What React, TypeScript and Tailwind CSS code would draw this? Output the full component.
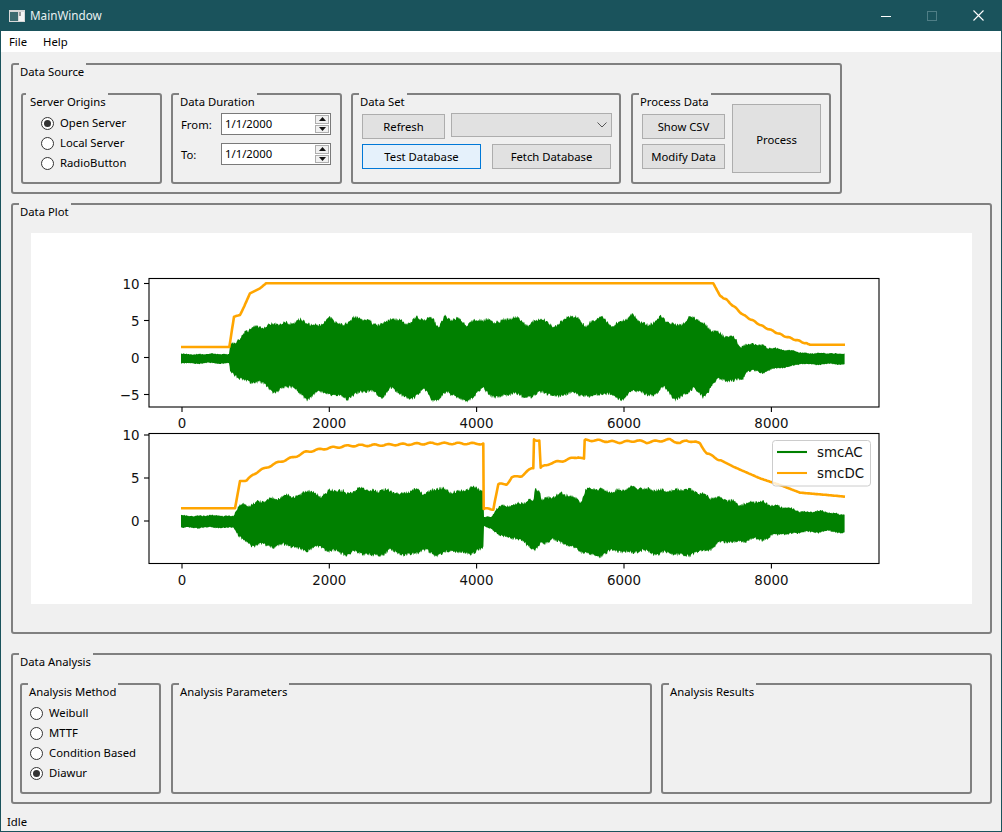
import { type ReactNode } from "react";

type Pt = [number, number];

// traced in 3x zoom coordinates, fromZoom brings them back to window pixels
const fromZoom = (pts: number[][], ox: number, oy: number): Pt[] =>
  pts.map(([x, y]) => [ox + x / 3, oy + y / 3]);

const top1 = [
  ...fromZoom([[243, 267], [388, 267], [390, 235], [420, 225], [440, 200], [460, 183], [520, 180], [600, 165], [640, 185], [690, 158], [730, 185], [760, 152], [810, 170], [820, 185], [880, 157], [920, 180], [950, 155], [1000, 165], [1015, 188], [1035, 155], [1075, 160], [1100, 183], [1140, 158], [1200, 175]], 100, 265),
  ...fromZoom([[30, 155], [55, 155], [85, 185], [120, 158], [175, 185], [200, 155], [235, 155], [260, 185], [300, 155], [340, 180], [400, 152], [445, 180], [480, 160], [530, 180], [580, 158], [620, 180], [670, 215], [700, 215], [725, 240], [760, 238], [830, 250], [875, 258], [930, 265], [1035, 265]], 500, 265),
];
const bottom1 = [
  ...fromZoom([[243, 295], [388, 295], [390, 320], [420, 345], [470, 350], [520, 380], [570, 365], [620, 400], [680, 380], [745, 405], [780, 375], [850, 395], [870, 370], [930, 405], [970, 372], [995, 408], [1040, 385], [1100, 408], [1150, 375], [1200, 400]], 100, 265),
  ...fromZoom([[40, 385], [100, 400], [130, 375], [170, 400], [220, 380], [270, 400], [300, 380], [370, 405], [400, 372], [440, 395], [490, 370], [525, 405], [580, 370], [610, 400], [640, 350], [700, 345], [730, 340], [740, 320], [790, 320], [860, 305], [900, 298], [1035, 298]], 500, 265),
];
const top2 = [
  ...fromZoom([[243, 272], [400, 272], [415, 245], [450, 240], [480, 225], [540, 222], [560, 205], [600, 215], [620, 197], [660, 210], [690, 195], [740, 205], [785, 185], [810, 205], [860, 190], [900, 210], [950, 190], [980, 205], [1020, 190], [1080, 200], [1135, 187], [1150, 195], [1152, 275]], 100, 425),
  ...fromZoom([[35, 275], [50, 250], [95, 237], [130, 230], [160, 230], [165, 195], [180, 195], [185, 225], [215, 210], [270, 210], [305, 225], [315, 195], [380, 195], [430, 195], [480, 185], [540, 200], [600, 190], [680, 210], [730, 225], [800, 235], [850, 230], [900, 245], [960, 258], [1030, 260], [1095, 268]], 480, 425),
];
const bottom2 = [
  ...fromZoom([[243, 308], [400, 308], [420, 340], [445, 355], [490, 365], [550, 360], [600, 372], [650, 372], [700, 375], [735, 392], [770, 378], [820, 398], [870, 375], [910, 392], [960, 378], [1000, 388], [1060, 380], [1100, 385], [1150, 378], [1152, 305]], 100, 425),
  ...fromZoom([[35, 310], [60, 335], [130, 345], [165, 385], [185, 350], [215, 345], [290, 370], [310, 385], [330, 395], [400, 380], [470, 380], [550, 385], [630, 390], [660, 385], [700, 365], [745, 350], [800, 350], [850, 340], [920, 325], [1030, 320], [1095, 322]], 480, 425),
];

const dc1 = [
  ...fromZoom([[243, 246], [388, 246], [402, 155], [420, 150], [430, 130], [450, 85], [480, 70], [498, 55], [1200, 55]], 100, 265),
  ...fromZoom([[640, 55], [660, 92], [680, 105], [730, 150], [790, 185], [850, 212], [930, 239], [1035, 239]], 500, 265),
];
const dc2 = [
  ...fromZoom([[243, 250], [405, 250], [420, 168], [440, 168], [460, 147], [500, 127], [540, 110], [580, 97], [620, 80], [680, 70], [750, 62], [850, 60], [1000, 55], [1150, 56], [1151, 252], [1180, 252]], 100, 425),
  ...fromZoom([[55, 178], [80, 177], [95, 158], [125, 152], [155, 130], [160, 128], [162, 43], [178, 47], [182, 128], [210, 115], [250, 107], [295, 95], [312, 103], [314, 45], [360, 47], [420, 52], [470, 47], [500, 52], [570, 44], [600, 55], [620, 46], [660, 55], [680, 85], [760, 125], [840, 160], [900, 180], [960, 203], [1030, 209], [1095, 215]], 480, 425),
];

function interp(pts: Pt[], x: number) {
  for (let i = 1; i < pts.length; i++) {
    if (x <= pts[i][0]) {
      const [x0, y0] = pts[i - 1];
      const [x1, y1] = pts[i];
      return x1 === x0 ? y1 : y0 + ((y1 - y0) * (x - x0)) / (x1 - x0);
    }
  }
  return pts[pts.length - 1][1];
}

function noise(seed: number) {
  let s = seed;
  return () => {
    s = (s * 16807) % 2147483647;
    return s / 2147483647;
  };
}

function wavePath(top: Pt[], bottom: Pt[], seed: number) {
  const rnd = noise(seed);
  const x0 = top[0][0];
  const x1 = top[top.length - 1][0];
  const up: string[] = [];
  const down: string[] = [];
  for (let x = x0; x <= x1; x += 0.6) {
    const t = interp(top, x);
    const b = interp(bottom, x);
    const amp = Math.min(1, (b - t) / 40);
    const lumpA = Math.sin(x / 2.3) * 1.1 + Math.sin(x / 5.1 + 1) * 1.2;
    const lumpB = Math.sin(x / 2.9 + 2) * 1.1 + Math.sin(x / 4.3) * 1.2;
    up.push(`${x.toFixed(2)},${(t + (lumpA + (rnd() - 0.5) * 3.4) * amp).toFixed(2)}`);
    down.unshift(`${x.toFixed(2)},${(b + (lumpB + (rnd() - 0.5) * 3.4) * amp).toFixed(2)}`);
  }
  return `M${up.join("L")}L${down.join("L")}Z`;
}

// the DC traces wobble a little where they are not jumping
function ripple(pts: Pt[], period: number, amp: number, from: number, to: number) {
  const out: Pt[] = [pts[0]];
  for (let i = 1; i < pts.length; i++) {
    const [x0, y0] = pts[i - 1];
    const [x1, y1] = pts[i];
    const steps = Math.max(1, Math.round(x1 - x0));
    const steep = Math.abs(y1 - y0) > Math.abs(x1 - x0) * 2;
    for (let k = 1; k <= steps; k++) {
      const x = x0 + ((x1 - x0) * k) / steps;
      const y = y0 + ((y1 - y0) * k) / steps;
      const on = !steep && x > from && x < to;
      out.push([x, on ? y + Math.sin((x / period) * Math.PI * 2) * amp : y]);
    }
  }
  return out;
}

function toLine(pts: Pt[]) {
  return pts.map(([x, y]) => `${x.toFixed(1)},${y.toFixed(1)}`).join(" ");
}

const wave1 = wavePath(top1, bottom1, 4711);
const wave2 = wavePath(top2, bottom2, 9127);
const line1 = toLine(ripple(dc1, 9, 0.5, 722, 808));
const line2 = toLine(ripple(dc2, 14, 0.8, 245, 720));

function Axes({ y, h, yTicks, xLabelY }: { y: number; h: number; yTicks: [string, number][]; xLabelY: number }) {
  const xTicks: [string, number][] = [["0", 182], ["2000", 329.3], ["4000", 476.6], ["6000", 624], ["8000", 771.4]];
  return (
    <g>
      <rect x={149} y={y} width={730} height={h} fill="none" stroke="#000" strokeWidth={1.1} />
      {xTicks.map(([label, x]) => (
        <g key={label}>
          <line x1={x} x2={x} y1={y + h} y2={y + h + 5} stroke="#000" strokeWidth={1.1} />
          <text x={x} y={xLabelY} textAnchor="middle" fontSize={13.4} fill="#111">{label}</text>
        </g>
      ))}
      {yTicks.map(([label, ty]) => (
        <g key={label}>
          <line x1={144} x2={149} y1={ty} y2={ty} stroke="#000" strokeWidth={1.1} />
          <text x={139.5} y={ty + 5} textAnchor="end" fontSize={13.4} fill="#111">{label}</text>
        </g>
      ))}
    </g>
  );
}

function PlotFigure() {
  return (
    <svg viewBox="31 233 941 371" className="block w-[941px] h-[371px]" fontFamily="'DejaVu Sans', sans-serif">
      <rect x={31} y={233} width={941} height={371} fill="#fff" />
      <path d={wave1} fill="#008000" />
      <polyline points={line1} fill="none" stroke="#ffa500" strokeWidth={2.6} strokeLinejoin="round" />
      <Axes y={278.5} h={128.5} xLabelY={428} yTicks={[["10", 283.5], ["5", 320.5], ["0", 357.5], ["−5", 394.5]]} />

      <path d={wave2} fill="#008000" />
      <polyline points={line2} fill="none" stroke="#ffa500" strokeWidth={2.6} strokeLinejoin="round" />
      <Axes y={433.5} h={130} xLabelY={585} yTicks={[["10", 435], ["5", 478], ["0", 521]]} />

      <rect x={772.5} y={440.5} width={98} height={45.5} rx={3} fill="#fff" fillOpacity={0.8} stroke="#ccc" strokeWidth={1} />
      <line x1={777} x2={807} y1={452} y2={452} stroke="#008000" strokeWidth={2.1} />
      <line x1={777} x2={807} y1={473} y2={473} stroke="#ffa500" strokeWidth={2.1} />
      <text x={817} y={457} fontSize={13.4} fill="#111">smcAC</text>
      <text x={817} y={478} fontSize={13.4} fill="#111">smcDC</text>
    </svg>
  );
}

function GroupBox({ title, className, legendClass, children }: { title: string; className: string; legendClass?: string; children?: ReactNode }) {
  return (
    <div className={`relative border-2 border-[#808080] rounded-[3px] ${className}`}>
      <span className={`absolute -top-[2px] h-[18px] leading-[18px] bg-[#f0f0f0] pr-[2px] whitespace-nowrap ${legendClass ?? "left-[6px] pl-[1px]"}`}>
        {title}
      </span>
      {children}
    </div>
  );
}

function Radio({ label, checked }: { label: string; checked?: boolean }) {
  return (
    <div className="flex items-center h-[20px]">
      <span className="flex items-center justify-center w-[13px] h-[13px] rounded-full border border-[#333] bg-white">
        {checked && <span className="w-[7px] h-[7px] rounded-full bg-[#333]" />}
      </span>
      <span className="ml-[6px] pt-[1px]">{label}</span>
    </div>
  );
}

function Btn({ children, className, focused }: { children: ReactNode; className: string; focused?: boolean }) {
  return (
    <button className={`flex items-center justify-center pt-[1px] border ${focused ? "border-[#0078d7] bg-[#e5f1fb]" : "border-[#adadad] bg-[#e1e1e1]"} ${className}`}>
      {children}
    </button>
  );
}

function SpinArrow({ up }: { up?: boolean }) {
  return (
    <span className="flex flex-1 items-center justify-center border border-[#adadad] bg-[#f0f0f0]">
      <svg width="7" height="4" viewBox="0 0 7 4">
        <path d={up ? "M3.5 0L7 4H0Z" : "M0 0H7L3.5 4Z"} fill="#111" />
      </svg>
    </span>
  );
}

function DateEdit() {
  return (
    <div className="flex items-center w-[110px] h-[22px] border border-[#7a7a7a] bg-white">
      <span className="flex-1 pl-[3px] pt-[1px]">1/1/2000</span>
      <span className="flex flex-col gap-[1px] w-[14px] h-[18px] mr-[1px]">
        <SpinArrow up />
        <SpinArrow />
      </span>
    </div>
  );
}

export default function App() {
  return (
    <div
      className="relative flex flex-col w-[1002px] h-[832px] overflow-hidden bg-[#f0f0f0] border-x border-b border-[#1a535c] text-[11.3px] text-black"
      style={{ fontFamily: "'Noto Sans', sans-serif" }}
    >
      {/* title bar */}
      <div className="flex items-center h-[31px] -mx-[1px] bg-[#1a535c] text-[#e8f0f1] text-[11.7px]">
        <svg width="16" height="12" viewBox="0 0 16 12" className="ml-[9px]">
          <rect width="16" height="12" fill="#d8d8d8" />
          <rect x="1" y="2" width="8" height="9" fill="#3d6b70" />
          <rect x="10" y="2" width="5" height="9" fill="#f4f4f4" />
          <rect x="10" y="2" width="2" height="4" fill="#9a9a9a" />
        </svg>
        <span className="ml-[5px]">MainWindow</span>
        <div className="flex ml-auto mr-[1px]">
          <span className="flex items-center justify-center w-[46px] h-[31px]">
            <svg width="10" height="10" viewBox="0 0 10 10"><path d="M0 5.5H10" stroke="#fff" strokeWidth="1" /></svg>
          </span>
          <span className="flex items-center justify-center w-[46px] h-[31px]">
            <svg width="10" height="10" viewBox="0 0 10 10"><rect x=".5" y=".5" width="9" height="9" fill="none" stroke="#4f7e86" strokeWidth="1" /></svg>
          </span>
          <span className="flex items-center justify-center w-[46px] h-[31px]">
            <svg width="11" height="11" viewBox="0 0 11 11"><path d="M.5 .5L10.5 10.5M10.5 .5L.5 10.5" stroke="#fff" strokeWidth="1.1" /></svg>
          </span>
        </div>
      </div>

      {/* menu bar */}
      <div className="flex items-center h-[21px] pt-[2px] bg-white">
        <span className="ml-[8px]">File</span>
        <span className="ml-[16px]">Help</span>
      </div>

      <div className="flex flex-col flex-1 px-[10px] pt-[11px]">
        <GroupBox title="Data Source" className="w-[831px] h-[131px] flex pl-[8px] pt-[28px]">
          <GroupBox title="Server Origins" legendClass="left-[3px] pl-[4px]" className="w-[141px] h-[91px] pl-[18px] pt-[18px]">
            <Radio label="Open Server" checked />
            <Radio label="Local Server" />
            <Radio label="RadioButton" />
          </GroupBox>

          <GroupBox title="Data Duration" className="ml-[9px] w-[171px] h-[91px] pl-[8px] pt-[18px]">
            <div className="flex flex-col gap-[8px]">
              <div className="flex items-center">
                <span className="w-[40px] pt-[3px]">From:</span>
                <DateEdit />
              </div>
              <div className="flex items-center">
                <span className="w-[40px] pt-[3px]">To:</span>
                <DateEdit />
              </div>
            </div>
          </GroupBox>

          <GroupBox title="Data Set" className="ml-[9px] w-[270px] h-[91px] pl-[9px] pt-[18px]">
            <div className="flex items-start gap-[6px]">
              <Btn className="mt-[1px] w-[83px] h-[25px]">Refresh</Btn>
              <div className="flex items-center justify-end w-[161px] h-[24px] border border-[#adadad] bg-[#e1e1e1] pr-[4px]">
                <svg width="10" height="6" viewBox="0 0 10 6"><path d="M.5 .5L5 5L9.5 .5" fill="none" stroke="#555" strokeWidth="1" /></svg>
              </div>
            </div>
            <div className="flex gap-[11px] mt-[5px]">
              <Btn focused className="w-[119px] h-[25px]">Test Database</Btn>
              <Btn className="w-[119px] h-[25px]">Fetch Database</Btn>
            </div>
          </GroupBox>

          <GroupBox title="Process Data" className="ml-[10px] w-[200px] h-[91px] flex items-start pl-[9px] pt-[9px]">
            <div className="flex flex-col gap-[5px] mt-[10px]">
              <Btn className="w-[83px] h-[25px]">Show CSV</Btn>
              <Btn className="w-[83px] h-[25px]">Modify Data</Btn>
            </div>
            <Btn className="ml-[7px] w-[89px] h-[69px]"><span className="mt-[2px]">Process</span></Btn>
          </GroupBox>
        </GroupBox>

        <GroupBox title="Data Plot" className="mt-[9px] w-[981px] h-[431px] pl-[18px] pt-[28px]">
          <PlotFigure />
        </GroupBox>

        <GroupBox title="Data Analysis" className="mt-[19px] w-[981px] h-[151px] flex pl-[7px] pt-[28px]">
          <GroupBox title="Analysis Method" className="w-[141px] h-[111px] pl-[8px] pt-[18px]">
            <Radio label="Weibull" />
            <Radio label="MTTF" />
            <Radio label="Condition Based" />
            <Radio label="Diawur" checked />
          </GroupBox>
          <GroupBox title="Analysis Parameters" className="ml-[10px] w-[481px] h-[111px]" />
          <GroupBox title="Analysis Results" className="ml-[9px] w-[311px] h-[111px]" />
        </GroupBox>

        <div className="mt-[10px] -ml-[4px]">Idle</div>
      </div>
    </div>
  );
}
